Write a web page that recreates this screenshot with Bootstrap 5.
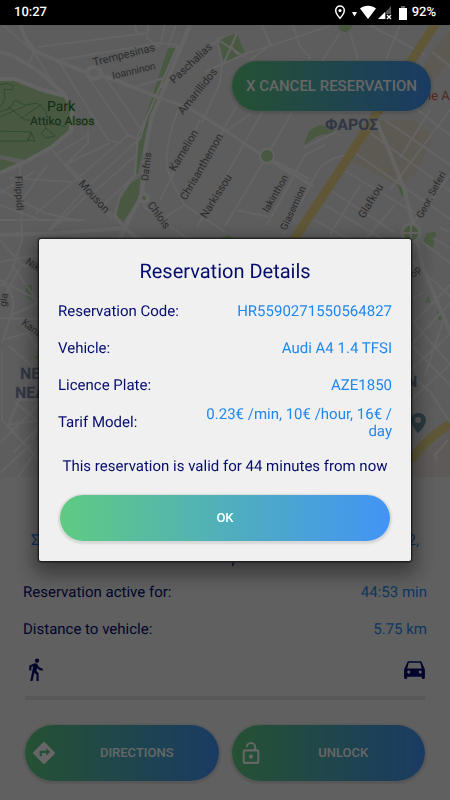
<!DOCTYPE html>
<html lang="en">
<head>
<meta charset="utf-8">
<meta name="viewport" content="width=device-width, initial-scale=1">
<title>Reservation Details</title>
<link href="https://cdn.jsdelivr.net/npm/bootstrap@5.3.0/dist/css/bootstrap.min.css" rel="stylesheet">
<style>
  :root { --navy: #050c6e; --sky: #1e88f0; }
  body { font-family: Roboto, sans-serif; font-size: 15px; line-height: 17px; color: var(--navy); background: #f0f0f0; text-rendering: geometricPrecision; }
  .status-bar { height: 25px; padding: 0 14px; font-size: 13px; font-weight: 500; z-index: 1060; }
  .map-area { min-height: 200px; }
  .map-area svg { position: absolute; inset: 0; font-weight: 400; }
  .pill { border: 0; border-radius: 28px; color: #fff; font-size: 13px; font-weight: 500; line-height: 16px;
    background: linear-gradient(90deg, #5ecb82, #4294f5); box-shadow: 0 1px 2px 2px rgba(0,0,0,.1); }
  .pill:hover { color: #fff; }
  .cancel-pill { position: absolute; top: 36px; right: 19px; height: 50px; padding: 0 14px; font-size: 15px; }
  .action-pill { height: 56px; }
  .ok-pill { height: 46px; margin: 0 2px; }
  .panel { padding: 54px 23px 19px; }
  .address { padding: 0 8px; line-height: 19px; }
  .address-rest { margin-bottom: 5px; }
  .sky { color: var(--sky); }
  .detail { min-height: 37px; }
  .trip-icons { height: 48px; padding: 0 0 6px; }
  .progress.trip { height: 4px; margin: 0 2px 25px; border-radius: 0; background: #dcdcdc; }
  .actions { gap: 13px; padding: 0 2px; }
  .modal-dialog.details { max-width: none; margin: 0 39px; min-height: 100%; }
  .details .modal-content { background: #f0f0f0; border: 0; border-radius: 2px; padding: 20px 19px;
    color: var(--navy); box-shadow: 0 0 2px 1px rgba(0,0,0,.8), 0 8px 20px 6px rgba(0,0,0,.4); }
  .details h1 { font-size: 20px; line-height: 24px; margin: 0 0 10px; font-weight: 400; }
  .details dd { max-width: 190px; }
  .details .validity { margin: 17px 0 20px; }
  .modal.scrim { background: rgba(0,0,0,.6); }
</style>
<script src="https://cdn.jsdelivr.net/npm/bootstrap@5.3.0/dist/js/bootstrap.bundle.min.js"></script>
</head>
<body>
<div class="d-flex flex-column min-vh-100">
  <header class="status-bar position-relative bg-black text-white d-flex align-items-center justify-content-between">
    <span>10:27</span>
    <span class="d-flex align-items-center">
      <svg width="80" height="18" viewBox="332 4 80 18" aria-hidden="true">
        <path d="M340 6a4.300 4.300 0 0 0-4.300 4.300c0 3.400 4.300 8 4.300 8s4.300-4.600 4.300-8A4.300 4.300 0 0 0 340 6z" fill="none" stroke="#fff" stroke-width="1.500"/>
        <circle cx="340" cy="10.500" r="1.600" fill="#fff"/>
        <path d="M352 12h5l-2.500 4.500zM360 8.500c4.500-3.600 11.500-3.600 16 0l-8 10.500z" fill="#fff"/>
        <path d="M391 6v8h-5v5h-7z" fill="#555"/>
        <path d="M385 12v7h-7z" fill="#fff"/>
        <path d="M387 15l4 4m0-4l-4 4" stroke="#fff" stroke-width="1.300"/>
        <path d="M399 8h8v12h-8z" fill="#fff"/><path d="M401 6h4v2h-4z" fill="#666"/>
      </svg>
      <span>92%</span>
    </span>
  </header>

  <section class="map-area position-relative flex-fill overflow-hidden" aria-label="Map">
    <svg width="100%" height="100%" viewBox="0 25 450 452" preserveAspectRatio="xMidYMid slice" font-family="Roboto, sans-serif">
      <path fill="#e8e8e8" d="M0 25h450v452H0z"/>
      <g fill="#e8e0d0">
        <path d="M420 70l12-18 18-22v30l-20 25zM372 120h40l22 16-20 40-30-8-28-12zM352 162l30-38 42 26-22 38z"/>
        <path fill="#ebe1df" d="M411 477v-12l39-35v47z"/>
      </g>
      <g fill="#b7dfa4">
        <path d="M0 81l14 0 28 11 23 6 7 10-2 22-20 16-24 14-26-5zM0 159l17 4-17 9z"/>
        <path d="M168 48h9l-12 30-10 27-6 13-6 32-5 23-3 2 4-40 12-35zM140 177l-1 21-16 24-7-7 4-15 10-16z"/>
        <path d="M218 40l19-7 8 20-21 10zM304 145l5-14 10-6 12 2 5 5-18 4zM215 240h20l-6-5zM397 184l10 5-5 8zM424 240l3-7 9-1-1 8z"/>
        <path d="M338 25h15q-3 7-8 7t-7-7z"/>
        <path d="M426 234l10-2-3 16-10-4zM425 302l4-7 1 8zM437 310l8 9-7 1zM25 285l7 0-1 16-4-4zM34 358l6-4v6z"/>
      </g>
      <g fill="none" stroke="#76b878" stroke-width="1">
        <path d="M0 85q8-3 13 1l-1 4-8-1 1 10-5 8M0 112l10-4 5-8 10 5 12-2 7 6 7 14 14 4M0 117l25-11M20 119l22-15M8 107l17 13 26 0M0 131l31 1-3 9-28 0M31 132l4 9-8-1 5-6M46 128l9 8-9 2-5-5zM46 128l-2-10"/>
      </g>
      <g fill="none" stroke="#f9f9f9" stroke-width="2">
        <g stroke-width="4">
          <path d="M20 25l6 14 9 12 25 11 28 11 22 5 50 20"/>
          <path d="M0 52l12 3 28 17 25 23 7 13-1 23-19 16-27 15-25 11M0 79l15 0 28 11 22 6"/>
          <path d="M190 25l-16 39-14 34-8 18-6 30-4 49-17 33-14 30"/>
          <path d="M0 235l60-2 65-5 28 22M375 118l17 40 12 30 11 44 8 36 27 64"/>
        </g>
        <path stroke-width="3" d="M160 98l29 10 36 22 20 14 34 22 34 20"/>
        <path d="M3 25l30 26 20 32M35 50l-7 15M38 47l109-14M59 60l100-17 18 2M135 25l2 9M148 25l-1 13 12 9M165 25l-5 20M176 25l-8 22"/>
        <path d="M59 62l49 78 12 3 8-9M88 77l40 58 12 5M106 78l34 50M132 88l32-10M148 113l-8 26M178 45l-28 65-12 25-3 40-15 20-5 20 10 13M52 150l26 30 47 48M88 135q-20 12-33 20M88 130v13l-20 19M128 135l-50 43M138 140l-50 46M136 155l-45 40M135 175l-35 33M110 143l-42 20"/>
        <path d="M160 88l8-8 50-40 7-4M217 38l5 25-2 20-18 40M218 40l27 17M237 33l-13 30M178 110q-18 50-8 65 4 14 15 30l40 27M200 120l-40 80M185 205l-25 15M142 205l33 25 14 10"/>
        <path d="M20 162l2 78M0 193l35-22M0 190l20 10 25 13 35 8M0 220l85 0M10 178l62 4M36 213l40-33M50 231l36-35M22 200l25-35M0 205l38 14M66 164l22 22-40 45M90 188l22 32"/>
        <path d="M205 72l40-18 55-18 30-10M262 25l8 20-20 15M293 25l6 20 12 14M340 33l-18 28M350 32l8 28M400 25l-14 35M370 25l55 30M262 25l10 22M230 45l8 10"/>
        <path d="M237 105l-45 80M262 112l-65 115M292 112l-25 44-42 70M275 161l34 18M325 145l-20 10-38 70M336 132l-32 16M353 155q-30 0-40 25l-30 55M225 132l25-18M237 210l32 7"/>
        <path d="M432 52l18 14M405 100l45 35M385 120l65 45M370 133l80 58M355 153l95 66M345 171l72 43M330 190l65 43M325 205l60 35M315 220l35 20M450 110l-60 80M430 110l-30 48M360 185l-30 50M450 175l-50 65M440 228l10 4M395 205l-30 35"/>
        <path d="M420 240l30 23M433 238l17 10M411 260l39 36M411 325l39-40M411 345l39-42M411 370l39-36M411 400l39-35M411 320l39 44M411 345l39 40M411 375l20 18 18 28M411 300l12-8M445 315l-20 60M448 440l-13 15 2 5"/>
        <path d="M0 240l22 25 16 3M22 240l-12 35-10 12M0 262l38-7M0 280l38 20M12 265l28 40M0 305l20-38M12 315l26-12M0 318l38 1M2 283q15 10 10 30l-10 30M2 340l36-10M20 320l18 30M8 345l25 22-27 63M2 350v70l40 43M6 425l34-5M17 400h25M15 402l27 22M0 443l40-40M14 452l25-25M0 473l30-28M18 477l24-35M32 440l8-18"/>
      </g>
      <g fill="#b7dfa4" stroke="#f9f9f9">
        <ellipse cx="94" cy="73" rx="7" ry="6" fill="#e8e8e8" stroke-width="4"/>
        <circle cx="144" cy="198" r="4" stroke-width="4"/>
        <circle cx="267" cy="156" r="7" stroke-width="2"/>
        <circle cx="411" cy="233" r="9" stroke-width="3"/><path d="M411 224v18M402 233h18" stroke-width="2"/>
      </g>
      <g fill="none" stroke="#edda8a">
        <path stroke-width="9" d="M438 20l-72 110-18 28-59 89M411 461q10-18 39-37"/>
      </g>
      <path d="M418 413a7 7 0 0 0-7 7c0 6 7 13 7 13s8-7 8-13a7 7 0 0 0-8-7z" fill="#6e93a8"/><circle cx="418" cy="420" r="3" fill="#e7e7e7"/>
      <g font-size="10" fill="#6d6d6d" stroke="#e7e7e7" stroke-width="2" paint-order="stroke">
        <text transform="translate(94 66) rotate(-14)" font-size="11">Trempesinas</text>
        <text transform="translate(113 79) rotate(-13)">Ioanninon</text>
        <text transform="translate(174 84) rotate(-43)" font-size="11">Paschalias</text>
        <text transform="translate(183 115) rotate(-51)" font-size="11">Amarillidos</text>
        <text transform="translate(148 181) rotate(-83)">Dafnis</text>
        <text transform="translate(175 172) rotate(-59)" font-size="11">Kamelion</text>
        <text transform="translate(186 201) rotate(-60)" font-size="11">Chrisanthemon</text>
        <text transform="translate(206 219) rotate(-58)" font-size="11">Narkissou</text>
        <text transform="translate(78 184) rotate(48)" font-size="11">Mouson</text>
        <text transform="translate(147 205) rotate(54)" font-size="11">Chlois</text>
        <text transform="translate(15 176) rotate(87)">Filippidi</text>
        <text transform="translate(268 213) rotate(-60)">Iakinthon</text>
        <text transform="translate(286 231) rotate(-65)">Giasemion</text>
        <text transform="translate(364 219) rotate(-59)" font-size="11">Glafkou</text>
        <text transform="translate(422 219) rotate(-62)">Geor. Seferi</text>
        <text transform="translate(25 263) rotate(35)">Nik</text>
        <text transform="translate(21 324) rotate(36)">Kana</text>
        <text transform="translate(6 307) rotate(-82)">gia</text>
        <text transform="translate(414 278) rotate(-50)">op</text>
      </g>
      <g fill="#2f7038" stroke="#b7dfa4" stroke-width="1" paint-order="stroke">
        <text x="47" y="111" font-size="14">Park</text><text x="30" y="125" font-size="12">Attiko Alsos</text>
      </g>
      <g fill="#7c8aa8" font-size="16" font-weight="700" stroke="#e7e7e7" stroke-width="1" paint-order="stroke">
        <text x="325" y="130">ΦΑΡΟΣ</text><text x="20" y="379">NE</text><text x="15" y="398">NEA</text><text x="406" y="387">N</text>
      </g>
      <text x="428" y="100" font-size="13" fill="#c9634a">ie A</text>
    </svg>
    <button type="button" class="btn pill cancel-pill">X CANCEL RESERVATION</button>
  </section>

  <main class="panel">
    <div class="address sky d-flex justify-content-between"><span>Σ</span><span>2,</span></div>
    <div class="address address-rest text-center ps-4">,</div>
    <dl class="m-0">
      <div class="detail d-flex align-items-center justify-content-between"><dt class="fw-normal">Reservation active for:</dt><dd class="sky m-0">44:53 min</dd></div>
      <div class="detail d-flex align-items-center justify-content-between"><dt class="fw-normal">Distance to vehicle:</dt><dd class="sky m-0">5.75 km</dd></div>
    </dl>
    <div class="trip-icons d-flex align-items-center justify-content-between">
      <svg width="25" height="25" viewBox="0 0 24 24" fill="currentColor" role="img" aria-label="Walk"><path d="M13.500 5.500c1.100 0 2-.9 2-2s-.9-2-2-2-2 .9-2 2 .9 2 2 2zM9.800 8.900L7 23h2.100l1.800-8 2.100 2v6h2v-7.500l-2.100-2 .6-3C14.800 12 16.800 13 19 13v-2c-1.900 0-3.500-1-4.300-2.400l-1-1.600c-.4-.6-1-1-1.700-1-.3 0-.5.100-.8.100L6 8.300V13h2V9.600l1.800-.7"/></svg>
      <svg width="25" height="25" viewBox="0 0 24 24" fill="currentColor" role="img" aria-label="Car"><path d="M18.920 5.010C18.720 4.420 18.160 4 17.500 4h-11c-.66 0-1.210.42-1.420 1.010L2 12v8c0 .55.45 1 1 1h1c.55 0 1-.45 1-1v-1h14v1c0 .55.45 1 1 1h1c.55 0 1-.45 1-1v-8l-3.080-6.990zM6.500 16c-.83 0-1.500-.67-1.500-1.500S5.670 13 6.500 13s1.500.67 1.500 1.500S7.330 16 6.500 16zm11 0c-.83 0-1.500-.67-1.500-1.500s.67-1.500 1.500-1.500 1.500.67 1.500 1.500-.67 1.500-1.500 1.500zM5 11l1.500-5.500h11L19 11H5z"/></svg>
    </div>
    <div class="progress trip" role="progressbar" aria-label="Distance covered" aria-valuenow="0" aria-valuemin="0" aria-valuemax="100"></div>
    <div class="actions d-flex">
      <button type="button" class="btn pill action-pill d-flex align-items-center flex-fill w-50 p-0 ps-2">
        <svg width="22" height="22" viewBox="2 2 20 20" fill="currentColor" aria-hidden="true"><path d="M21.710 11.290l-9-9a1 1 0 0 0-1.410 0l-9 9a1 1 0 0 0 0 1.410l9 9a1 1 0 0 0 1.410 0l9-9a1 1 0 0 0 0-1.410zM14 14.500V12h-4v3H8v-4c0-.55.45-1 1-1h5V7.500l3.500 3.500-3.500 3.500z"/></svg>
        <span class="flex-fill text-center">DIRECTIONS</span>
      </button>
      <button type="button" class="btn pill action-pill d-flex align-items-center flex-fill w-50 p-0 ps-2">
        <svg width="22" height="24" viewBox="2 0 20 23" fill="currentColor" aria-hidden="true"><path fill-rule="evenodd" d="M6 8h9.100V6a3.100 3.100 0 0 0-6.200 0H7a5 5 0 0 1 10 0v2h1a2 2 0 0 1 2 2v10a2 2 0 0 1-2 2H6a2 2 0 0 1-2-2V10a2 2 0 0 1 2-2zm0 2v10h12V10z"/><circle cx="12" cy="15" r="2"/></svg>
        <span class="flex-fill text-center">UNLOCK</span>
      </button>
    </div>
  </main>
</div>

<div class="modal scrim d-block" role="dialog" aria-modal="true" aria-labelledby="details-title">
  <div class="modal-dialog modal-dialog-centered details">
    <div class="modal-content">
      <h1 id="details-title" class="text-center">Reservation Details</h1>
      <dl class="m-0">
        <div class="detail d-flex align-items-center justify-content-between"><dt class="fw-normal">Reservation Code:</dt><dd class="sky m-0 text-end">HR5590271550564827</dd></div>
        <div class="detail d-flex align-items-center justify-content-between"><dt class="fw-normal">Vehicle:</dt><dd class="sky m-0 text-end">Audi A4 1.4 TFSI</dd></div>
        <div class="detail d-flex align-items-center justify-content-between"><dt class="fw-normal">Licence Plate:</dt><dd class="sky m-0 text-end">AZE1850</dd></div>
        <div class="detail d-flex align-items-center justify-content-between"><dt class="fw-normal">Tarif Model:</dt><dd class="sky m-0 text-end">0.23€ /min, 10€ /hour, 16€ / day</dd></div>
      </dl>
      <p class="validity text-center">This reservation is valid for 44 minutes from now</p>
      <button type="button" class="btn pill ok-pill">OK</button>
    </div>
  </div>
</div>
</body>
</html>
